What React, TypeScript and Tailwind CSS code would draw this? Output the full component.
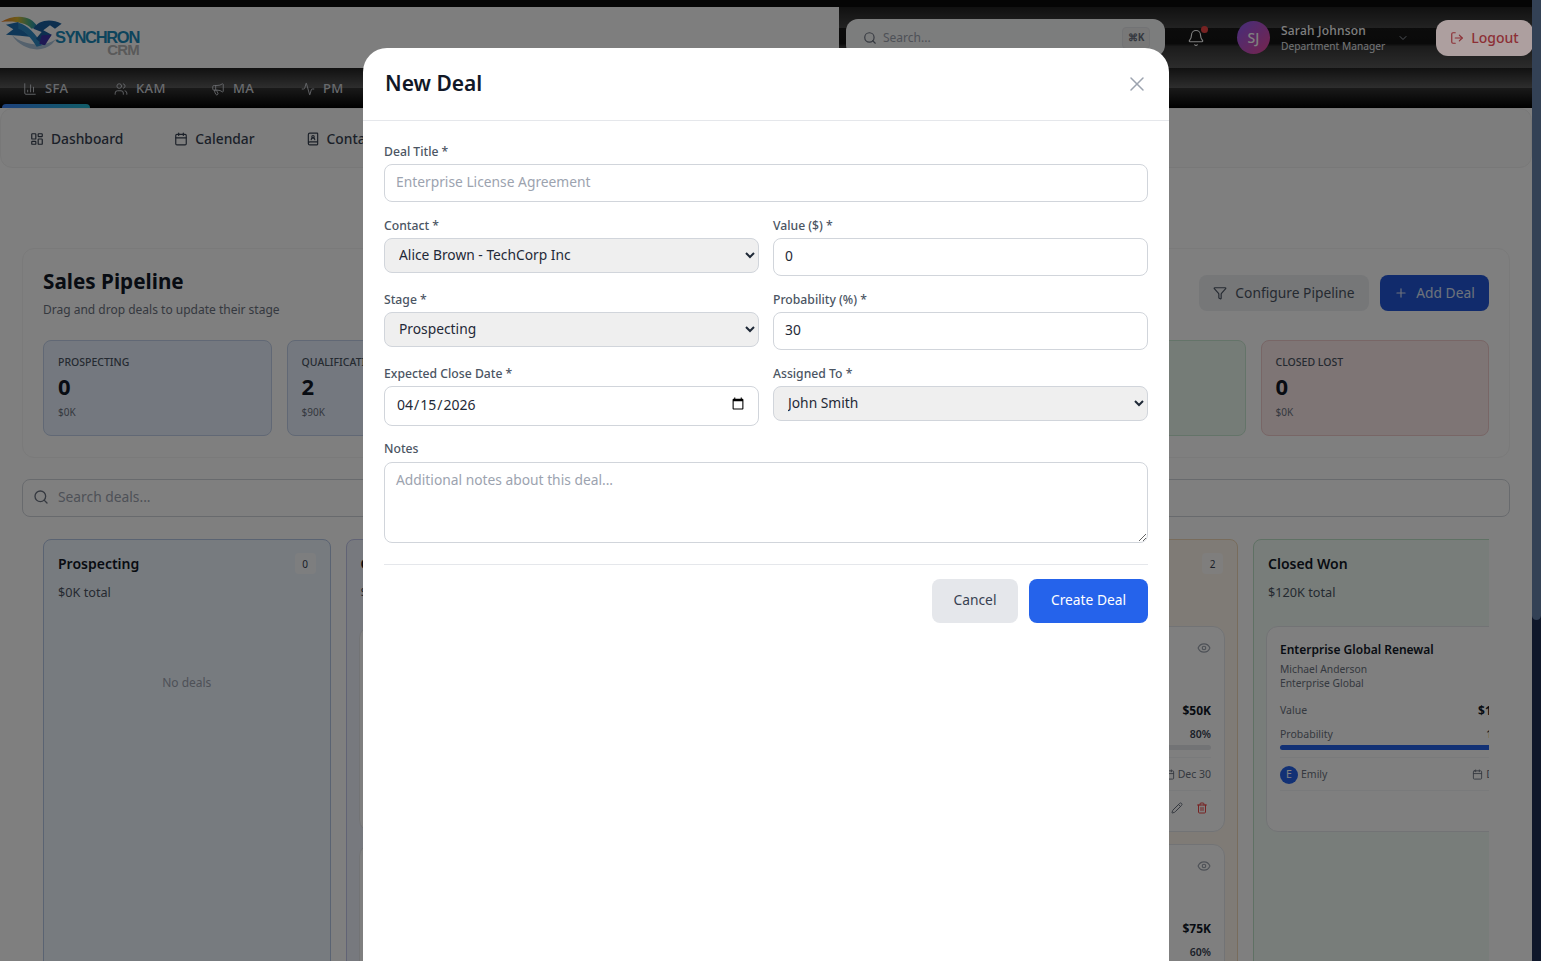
import {
  Activity,
  Bell,
  BookUser,
  Calendar,
  ChartColumn,
  ChevronDown,
  Eye,
  Filter,
  LayoutDashboard,
  LogOut,
  Megaphone,
  Pencil,
  Plus,
  Search,
  Trash2,
  Users,
  X,
} from "lucide-react";

const tabs = [
  { label: "SFA", icon: ChartColumn, className: "w-[88px] ml-[2px] pl-[21px]" },
  { label: "KAM", icon: Users, className: "w-[90px] ml-[5px] pl-[19px]" },
  { label: "MA", icon: Megaphone, className: "w-[88px] ml-[8px] pl-[18px]" },
  { label: "PM", icon: Activity, className: "w-[80px] pl-[20px]" },
];

const stats = [
  { label: "Prospecting", count: "0", total: "$0K", className: "bg-[#e8f1ff] border-[#c3d1ea]" },
  { label: "Qualification", count: "2", total: "$90K", className: "bg-[#e8f1ff] border-[#c3d1ea]" },
  { label: "Proposal", count: "2", total: "$85K", className: "bg-[#efe9fb] border-[#d3c6ee]" },
  { label: "Negotiation", count: "2", total: "$125K", className: "bg-[#fbeedd] border-[#eed9b8]" },
  { label: "Closed Won", count: "1", total: "$120K", className: "bg-[#ebf9ef] border-[#c9e8d2]" },
  { label: "Closed Lost", count: "0", total: "$0K", className: "bg-[#fdeaea] border-[#f0cccc]" },
];

type Deal = {
  title: string;
  person: string;
  company: string;
  value: string;
  probability: number;
  owner: string;
  date: string;
  removable?: boolean;
};

const columns: { name: string; total: string; className: string; deals: Deal[] }[] = [
  { name: "Prospecting", total: "$0K total", className: "bg-[#eff6ff] border-[#b4c6e4]", deals: [] },
  {
    name: "Qualification",
    total: "$90K total",
    className: "bg-[#eef2fd] border-[#c2c6ea]",
    deals: [
      { title: "Cloud Migration", person: "Alice Brown", company: "TechCorp Inc", value: "$50K", probability: 40, owner: "John", date: "Dec 20", removable: true },
      { title: "Support Contract", person: "David Lee", company: "Acme Ltd", value: "$40K", probability: 50, owner: "Emily", date: "Dec 22", removable: true },
    ],
  },
  {
    name: "Proposal",
    total: "$85K total",
    className: "bg-[#f5f0fd] border-[#d8ccf0]",
    deals: [],
  },
  {
    name: "Negotiation",
    total: "$125K total",
    className: "bg-[#fff7ed] border-[#f0d9b8]",
    deals: [
      { title: "Platform Upgrade", person: "Robert Chen", company: "Nova Systems", value: "$50K", probability: 80, owner: "John", date: "Dec 30", removable: true },
      { title: "Annual License", person: "Laura Kim", company: "Vertex Group", value: "$75K", probability: 60, owner: "Emily", date: "Jan 12", removable: true },
    ],
  },
  {
    name: "Closed Won",
    total: "$120K total",
    className: "bg-[#f0fbf4] border-[#bfe2c9]",
    deals: [
      { title: "Enterprise Global Renewal", person: "Michael Anderson", company: "Enterprise Global", value: "$120K", probability: 100, owner: "Emily", date: "Dec 5" },
    ],
  },
];

const DealCard = ({ deal }: { deal: Deal }) => (
  <div className="relative h-[206px] shrink-0 rounded-xl border border-[#e5e7eb] bg-white px-[13px] pt-[14px]">
    <Eye className="absolute right-[13px] top-[14px] h-[14px] w-[14px] text-[#9ca3af]" />
    <div className="text-[12px] leading-[18px] font-semibold text-[#111827]">{deal.title}</div>
    <div className="mt-[3px] text-[10.3px] leading-[14px] text-[#6b7280]">{deal.person}</div>
    <div className="text-[10.3px] leading-[14px] text-[#6b7280]">{deal.company}</div>
    <div className="mt-[11px] flex h-[20px] items-center justify-between text-[10.5px] text-[#6b7280]">
      <span>Value</span>
      <span className="text-[12px] font-bold text-[#111827]">{deal.value}</span>
    </div>
    <div className="mt-[4px] flex h-[20px] items-center justify-between text-[10.5px] text-[#6b7280]">
      <span>Probability</span>
      <span className="font-semibold text-[#374151]">{deal.probability}%</span>
    </div>
    <div className="h-[5px] rounded-full bg-[#e5e7eb]">
      <div className="h-full rounded-full bg-[#2563eb]" style={{ width: `${deal.probability}%` }} />
    </div>
    <div className="mt-[7px] flex h-[34px] items-center justify-between border-y border-[#f3f4f6] pt-[1px] text-[10.5px] text-[#6b7280]">
      <span className="flex items-center gap-[3px]">
        <span className="flex h-[18px] w-[18px] items-center justify-center rounded-full bg-[#2563eb] text-[10.5px] text-white">
          {deal.owner[0]}
        </span>
        {deal.owner}
      </span>
      <span className="flex items-center gap-[3px]">
        <Calendar className="h-[11px] w-[11px]" />
        {deal.date}
      </span>
    </div>
    <div className="mt-[11px] flex justify-end gap-[13px] pr-[3px]">
      <Pencil className="h-[12px] w-[12px] text-[#6b7280]" />
      {deal.removable && <Trash2 className="h-[12px] w-[12px] text-[#ef4444]" />}
    </div>
  </div>
);

const Logo = () => (
  <div className="relative h-[48px] w-[145px]">
    <svg viewBox="0 0 190 144" className="absolute left-0 top-0 h-[48px] w-[63.33px]">
      <defs>
        <linearGradient id="arc" x1="0" x2="1">
          <stop offset="0" stopColor="#e8772a" />
          <stop offset="0.45" stopColor="#dcb62f" />
          <stop offset="0.75" stopColor="#52b080" />
          <stop offset="1" stopColor="#1c86b8" />
        </linearGradient>
      </defs>
      <path d="M36 70 C70 100 130 108 168 82 L156 96 C125 124 66 116 36 70Z" fill="#a9c3da" />
      <path d="M3 30 C30 12 70 10 90 22 C100 28 108 36 112 44 L95 50 C75 30 40 26 3 30Z" fill="url(#arc)" />
      <path d="M18 38 L55 30 L60 48 C70 55 85 70 102 76 L60 71 L18 68 L40 52Z" fill="#1f6fb0" />
      <path d="M55 32 C80 38 110 65 126 100 L110 104 C95 80 75 55 55 50Z" fill="#2f8ac4" />
      <path d="M100 50 C115 25 150 18 185 35 L165 50 L150 40 L130 55 L155 68 L130 100 L108 80 L125 60Z" fill="#1a5f9e" />
      <path d="M125 70 L155 68 L135 100 L118 95Z" fill="#3f33a8" />
    </svg>
    <span className="absolute left-[55px] top-[16px] text-[16.5px] leading-[18px] font-bold tracking-[-1.3px] text-[#1a88b8] font-['Liberation_Sans',sans-serif]">
      SYNCHRON
    </span>
    <span className="absolute right-[6px] top-[29px] text-[15px] leading-[18px] font-bold tracking-[-0.8px] text-[#b4b4b4] font-['Liberation_Sans',sans-serif]">
      CRM
    </span>
  </div>
);

const labelClass = "block h-[23px] pt-[1px] text-[12.2px] leading-[20px] font-medium text-[#4b5563]";
const inputClass =
  "block w-full rounded-lg border border-[#d1d5db] bg-white px-[11px] text-[13.8px] text-[#1f2937] placeholder:text-[#9ca3af]";
const selectClass =
  "block h-[35px] w-full rounded-lg border border-[#d1d5db] bg-[#efefef] px-[10px] pb-[2px] text-[13.8px] text-[#1f2937]";

const Field = ({ label, children }: { label: string; children: React.ReactNode }) => (
  <div>
    <label className={labelClass}>{label}</label>
    {children}
  </div>
);

export default function App() {
  return (
    <div className="flex h-screen w-full overflow-hidden bg-[#0f172a] font-['Noto_Sans',sans-serif]">
      <div className="relative min-w-0 flex-1 overflow-hidden bg-white">
        {/* Top bars */}
        <div className="h-[7px] bg-[#0a0a0a]" />
        <header className="flex h-[61px]">
          <div className="w-[839px] shrink-0 bg-[#fdfdfd] pt-[5px]">
            <Logo />
          </div>
          <div className="flex flex-1 items-center bg-[linear-gradient(180deg,#222_0%,#444_34%,#181818_35%,#141414_60%,#383838_65%,#585858_100%)] pl-[7px]">
            <div className="flex h-[38px] w-[319px] items-center rounded-xl bg-[#f9fafb] pl-[17px] pr-[15px]">
              <Search className="h-[14px] w-[14px] text-[#6b7280]" />
              <span className="ml-[6px] flex-1 text-[12px] text-[#9ca3af]">Search...</span>
              <span className="flex h-[22px] w-[28px] items-center justify-center rounded border border-[#e5e7eb] bg-[#f0f0f0] text-[10px] font-bold text-[#6b7280]">
                ⌘K
              </span>
            </div>
            <div className="relative ml-[22px]">
              <Bell className="h-[18px] w-[18px] text-white" strokeWidth={1.5} />
              <span className="absolute -right-[3px] -top-[3px] h-[7px] w-[7px] rounded-full bg-[#ef4444]" />
            </div>
            <div className="ml-[32px] flex h-[33px] w-[33px] items-center justify-center rounded-full bg-[linear-gradient(135deg,#8b5cf6,#ec4899)] text-[14px] font-medium text-white">
              SJ
            </div>
            <div className="ml-[11px] w-[116px] pt-[2px]">
              <div className="text-[12px] leading-[16px] font-medium tracking-[0.2px] text-white">Sarah Johnson</div>
              <div className="text-[10.2px] leading-[15px] text-[#e5e7eb]">Department Manager</div>
            </div>
            <ChevronDown className="h-[12px] w-[12px] text-[#9ca3af]" />
            {/* sits above the backdrop in the original, so it stays lighter */}
            <button className="relative z-10 ml-[27px] flex h-[36px] w-[97px] items-center justify-center gap-[7px] rounded-xl bg-[#ad9f9f] text-[14px] font-medium text-[#8c2f35]">
              <LogOut className="h-[14px] w-[14px]" />
              Logout
            </button>
          </div>
        </header>
        <nav className="flex h-[40px] bg-[linear-gradient(180deg,#222_0%,#5c5c5c_50%,#333_51%,#000_100%)]">
          {tabs.map((tab, i) => (
            <div
              key={tab.label}
              className={`relative flex h-full items-center gap-[8px] pt-[2px] text-[13px] font-medium tracking-[0.4px] text-[#d1d5db] ${tab.className}`}
            >
              <tab.icon className="h-[14px] w-[14px]" strokeWidth={1.5} />
              {tab.label}
              {i === 0 && (
                <span className="absolute inset-x-0 bottom-0 h-[4px] rounded-t bg-[linear-gradient(90deg,#3b82f6,#22b8cf)]" />
              )}
            </div>
          ))}
        </nav>

        <div className="flex h-[60px] items-center gap-[51px] rounded-xl border border-[#f1f1f1] bg-[#fafafa] pl-[29px] pt-[2px] text-[13.8px] font-medium text-[#374151]">
          <span className="flex items-center gap-[7px]">
            <LayoutDashboard className="h-[14px] w-[14px]" />
            Dashboard
          </span>
          <span className="flex items-center gap-[7px]">
            <Calendar className="h-[14px] w-[14px]" />
            Calendar
          </span>
          <span className="flex items-center gap-[7px]">
            <BookUser className="h-[14px] w-[14px]" />
            Contacts
          </span>
        </div>

        {/* Page content */}
        <main className="px-[22px] pt-[80px]">
          <section className="h-[210px] rounded-xl border border-[#f4f4f4] bg-[#fefefe] px-[20px] pt-[18px]">
            <div className="flex items-start justify-between">
              <div>
                <h1 className="text-[20.7px] leading-[28px] font-bold text-[#111827]">Sales Pipeline</h1>
                <p className="mt-[6px] text-[12px] leading-[18px] text-[#6b7280]">Drag and drop deals to update their stage</p>
              </div>
              <div className="mt-[8px] flex gap-[11px]">
                <button className="flex h-[36px] w-[170px] items-center justify-center gap-[8px] rounded-lg bg-[#eceef1] text-[13.8px] text-[#4b5563]">
                  <Filter className="h-[14px] w-[14px]" />
                  Configure Pipeline
                </button>
                <button className="flex h-[36px] w-[109px] items-center justify-center gap-[8px] rounded-lg bg-[#2257d8] text-[13.8px] text-[#dbe4f7]">
                  <Plus className="h-[14px] w-[14px]" />
                  Add Deal
                </button>
              </div>
            </div>
            <div className="mt-[21px] grid grid-cols-6 gap-[15px]">
              {stats.map((stat) => (
                <div key={stat.label} className={`h-[96px] rounded-lg border pl-[14px] pt-[13px] ${stat.className}`}>
                  <div className="text-[10.5px] leading-[16px] font-medium uppercase text-[#4b5563]">{stat.label}</div>
                  <div className="mt-[1px] text-[22px] leading-[30px] font-bold text-[#111827]">{stat.count}</div>
                  <div className="mt-[4px] text-[10px] leading-[14px] text-[#6b7280]">{stat.total}</div>
                </div>
              ))}
            </div>
          </section>

          <div className="mt-[21px] flex h-[38px] items-center gap-[9px] rounded-lg border border-[#d1d5db] bg-white pb-[2px] pl-[10px] text-[13.8px] text-[#9ca3af]">
            <Search className="h-[16px] w-[16px] text-[#6b7280]" />
            Search deals...
          </div>

          <div className="mx-[21px] mt-[22px] flex h-[500px] gap-[15px] overflow-hidden">
            {columns.map((col) => (
              <div
                key={col.name}
                className={`flex w-[287.5px] shrink-0 flex-col gap-[12px] rounded-t-lg border px-[12px] pt-[14px] ${col.className}`}
              >
                <div className="relative h-[60px] shrink-0 pl-[2px]">
                  <div className="text-[14px] leading-[20px] font-semibold text-[#111827]">{col.name}</div>
                  <div className="mt-[9px] text-[12.7px] leading-[18px] text-[#4b5563]">{col.total}</div>
                  <span className="absolute right-[2px] -top-[1px] flex h-[21px] w-[21px] items-center justify-center rounded bg-white/70 pt-[1px] text-[10px] text-[#374151]">
                    {col.deals.length}
                  </span>
                </div>
                {col.deals.length === 0 ? (
                  <div className="mt-[47px] text-center text-[12px] leading-[20px] text-[#9ca3af]">No deals</div>
                ) : (
                  col.deals.map((deal) => <DealCard key={deal.title} deal={deal} />)
                )}
              </div>
            ))}
          </div>
        </main>

        {/* Modal */}
        <div className="absolute inset-0 flex justify-center bg-black/50 pt-[48px]">
          <div className="flex w-[806px] flex-col rounded-t-3xl bg-white">
            <div className="flex h-[73px] shrink-0 items-center justify-between border-b border-[#e5e7eb] pl-[22px] pr-[20px]">
              <h2 className="text-[21px] font-semibold text-[#111827]">New Deal</h2>
              <X className="h-6 w-6 text-[#9ca3af]" strokeWidth={1.5} />
            </div>
            <form className="px-[21px] pt-[20px]">
              <Field label="Deal Title *">
                <input type="text" placeholder="Enterprise License Agreement" className={`${inputClass} h-[38px] pb-[4px]`} />
              </Field>
              <div className="mt-[13px] grid grid-cols-2 gap-x-[14px] gap-y-[13px]">
                <Field label="Contact *">
                  <select className={selectClass} defaultValue="alice">
                    <option value="alice">Alice Brown - TechCorp Inc</option>
                  </select>
                </Field>
                <Field label="Value ($) *">
                  <input type="number" defaultValue="0" className={`${inputClass} h-[38px] pb-[4px]`} />
                </Field>
                <Field label="Stage *">
                  <select className={selectClass} defaultValue="prospecting">
                    <option value="prospecting">Prospecting</option>
                  </select>
                </Field>
                <Field label="Probability (%) *">
                  <input type="number" defaultValue="30" className={`${inputClass} h-[38px] pb-[4px]`} />
                </Field>
              </div>
              <div className="mt-[13px] grid grid-cols-2 gap-x-[14px]">
                <Field label="Expected Close Date *">
                  <input type="date" defaultValue="2026-04-15" className={`${inputClass} h-[40px] pb-[4px] text-[14px]`} />
                </Field>
                <Field label="Assigned To *">
                  <select className={selectClass} defaultValue="john">
                    <option value="john">John Smith</option>
                  </select>
                </Field>
              </div>
              <div className="mt-[12px]">
                <Field label="Notes">
                  <textarea
                    rows={3}
                    placeholder="Additional notes about this deal..."
                    className={`${inputClass} mt-[1px] h-[81px] py-[7px]`}
                  />
                </Field>
              </div>
              <div className="mt-[21px] flex justify-end gap-[11px] border-t border-[#e5e7eb] pt-[14px]">
                <button type="button" className="h-[44px] w-[86px] rounded-lg bg-[#e5e7eb] pb-[2px] text-[13.8px] text-[#374151]">
                  Cancel
                </button>
                <button type="button" className="h-[44px] w-[119px] rounded-lg bg-[#2563eb] pb-[2px] text-[13.8px] text-white">
                  Create Deal
                </button>
              </div>
            </form>
          </div>
        </div>
      </div>

      {/* Scrollbar */}
      <div className="w-[9px] shrink-0">
        <div className="h-[620px] rounded-b-full bg-[#334155]" />
      </div>
    </div>
  );
}
